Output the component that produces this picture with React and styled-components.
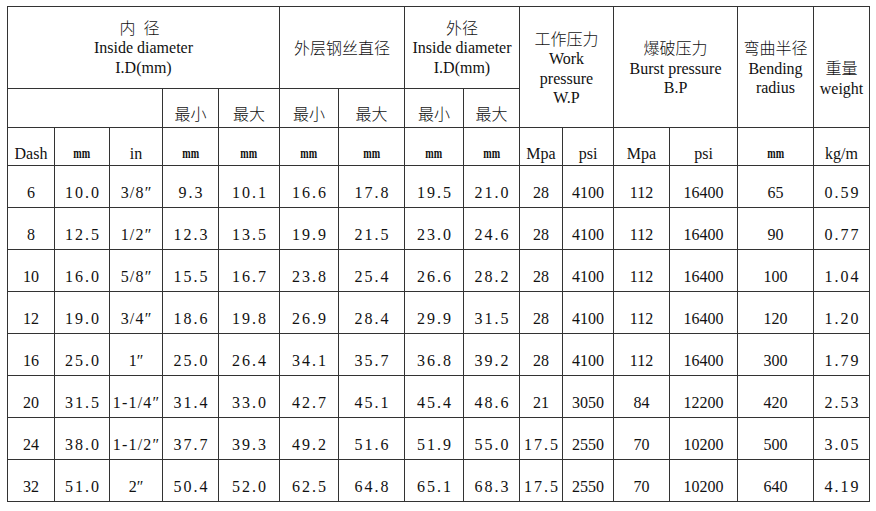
import React from 'react';
import styled, { createGlobalStyle } from 'styled-components';

const GlobalStyle = createGlobalStyle`
  body {
    margin: 0;
    background: #fff;
  }
`;

const Page = styled.div`
  padding: 6px 0 0 7px;
`;

const Grid = styled.div`
  display: inline-grid;
  grid-template-columns: 46px 54px 52px 55px 60px 58px 65px 58px 55px 42px 50px 55px 67px 75px 55px;
  grid-template-rows: 81px 38px 37px repeat(8, 41px);
  gap: 1px;
  padding: 1px;
  background: #333;
  font-family: "Liberation Serif", "Noto Sans CJK SC", serif;
  color: #111;
`;

const Cell = styled.div`
  background: #fff;
  display: flex;
  align-items: center;
  justify-content: center;
  text-align: center;
  font-size: 16px;
  line-height: 19.5px;
  white-space: nowrap;
  padding-top: ${p => p.$pt || 0}px;
  grid-column: ${p => p.$col || 'auto'};
  grid-row: ${p => p.$row || 'auto'};
  letter-spacing: ${p => p.$ls || 0}px;
  text-indent: ${p => p.$ls || 0}px;
`;

const Cjk = styled.span`
  font-family: "Noto Sans CJK SC", sans-serif;
  font-weight: 300;
  letter-spacing: ${p => p.$gap || 0}px;
`;

const Unit = styled.span`
  font-size: 14px;
  font-weight: 700;
  display: inline-block;
  transform: scaleX(0.72);
`;

const rows = [
  ['6', '10.0', '3/8″', '9.3', '10.1', '16.6', '17.8', '19.5', '21.0', '28', '4100', '112', '16400', '65', '0.59'],
  ['8', '12.5', '1/2″', '12.3', '13.5', '19.9', '21.5', '23.0', '24.6', '28', '4100', '112', '16400', '90', '0.77'],
  ['10', '16.0', '5/8″', '15.5', '16.7', '23.8', '25.4', '26.6', '28.2', '28', '4100', '112', '16400', '100', '1.04'],
  ['12', '19.0', '3/4″', '18.6', '19.8', '26.9', '28.4', '29.9', '31.5', '28', '4100', '112', '16400', '120', '1.20'],
  ['16', '25.0', '1″', '25.0', '26.4', '34.1', '35.7', '36.8', '39.2', '28', '4100', '112', '16400', '300', '1.79'],
  ['20', '31.5', '1-1/4″', '31.4', '33.0', '42.7', '45.1', '45.4', '48.6', '21', '3050', '84', '12200', '420', '2.53'],
  ['24', '38.0', '1-1/2″', '37.7', '39.3', '49.2', '51.6', '51.9', '55.0', '17.5', '2550', '70', '10200', '500', '3.05'],
  ['32', '51.0', '2″', '50.4', '52.0', '62.5', '64.8', '65.1', '68.3', '17.5', '2550', '70', '10200', '640', '4.19'],
];

// decimals and fractions were set in a wide monospace face in the source
const spacing = v => {
  if (v.includes('.')) return 2;
  if (v.includes('/')) return 1.2;
  return 0;
};

export default function App() {
  return (
    <Page>
      <GlobalStyle />
      <Grid>
        <Cell $col="1 / 6">
          <div>
            <Cjk $gap={8}>内径</Cjk><br />
            Inside diameter<br />
            I.D(mm)
          </div>
        </Cell>
        <Cell $col="6 / 8">
          <Cjk>外层钢丝直径</Cjk>
        </Cell>
        <Cell $col="8 / 10">
          <div>
            <Cjk>外径</Cjk><br />
            Inside diameter<br />
            I.D(mm)
          </div>
        </Cell>
        <Cell $col="10 / 12" $row="1 / 3" $pt={2}>
          <div>
            <Cjk>工作压力</Cjk><br />
            Work<br />
            pressure<br />
            W.P
          </div>
        </Cell>
        <Cell $col="12 / 14" $row="1 / 3" $pt={2}>
          <div>
            <Cjk>爆破压力</Cjk><br />
            Burst pressure<br />
            B.P
          </div>
        </Cell>
        <Cell $col="14 / 15" $row="1 / 3" $pt={2}>
          <div>
            <Cjk>弯曲半径</Cjk><br />
            Bending<br />
            radius
          </div>
        </Cell>
        <Cell $col="15 / 16" $row="1 / 3" $pt={22}>
          <div>
            <Cjk>重量</Cjk><br />
            weight
          </div>
        </Cell>

        <Cell $col="1 / 4" />
        {['最小', '最大', '最小', '最大', '最小', '最大'].map((t, i) => (
          <Cell key={i} $pt={11}>
            <Cjk>{t}</Cjk>
          </Cell>
        ))}

        <Cell $pt={14}>Dash</Cell>
        <Cell $pt={14}><Unit>mm</Unit></Cell>
        <Cell $pt={14}>in</Cell>
        {[0, 1, 2, 3, 4, 5].map(i => (
          <Cell key={i} $pt={14}><Unit>mm</Unit></Cell>
        ))}
        <Cell $pt={14}>Mpa</Cell>
        <Cell $pt={14}>psi</Cell>
        <Cell $pt={14}>Mpa</Cell>
        <Cell $pt={14}>psi</Cell>
        <Cell $pt={14}><Unit>mm</Unit></Cell>
        <Cell $pt={14}>kg/m</Cell>

        {rows.map((r, ri) =>
          r.map((v, ci) => (
            <Cell key={`${ri}-${ci}`} $pt={12} $ls={spacing(v)}>
              {v}
            </Cell>
          ))
        )}
      </Grid>
    </Page>
  );
}
